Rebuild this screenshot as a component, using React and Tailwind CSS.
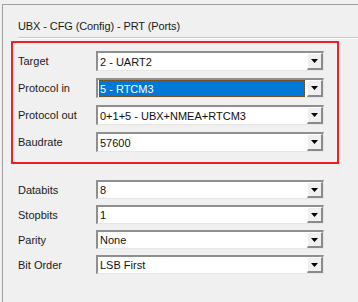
import React from 'react';

const Arrow = () => (
  <svg width="7" height="4" viewBox="0 0 7 4" className="block">
    <path d="M0 0h7L3.5 4z" fill="#000" />
  </svg>
);

const Combo = ({ value, selected = false, tall = true }) => (
  <div
    className={`flex w-[228px] ${tall ? 'h-[20px]' : 'h-[19px]'} bg-white border-t-2 border-l-2 border-t-[#8f8f8f] border-l-[#8f8f8f] border-b border-r border-b-[#e6e6e6] border-r-[#e6e6e6]`}
  >
    <div className="flex-1 flex items-center min-w-0">
      {selected ? (
        <div className="flex-1 h-full my-[1px] ml-[1px] mr-[2px] flex items-center bg-[#0078d7] text-white pl-[1px] outline outline-1 outline-dotted outline-[#6b4a1f] -outline-offset-1">
          {value}
        </div>
      ) : (
        <span className="pl-[2px] text-[#111]">{value}</span>
      )}
    </div>
    <div className="w-[16px] h-full flex items-center justify-center bg-[#f0f0f0] border-t border-l border-t-white border-l-white border-r-2 border-b-2 border-r-[#8a8a8a] border-b-[#8a8a8a]">
      <Arrow />
    </div>
  </div>
);

const Row = ({ label, value, selected, tall }) => (
  <div className="flex items-center">
    <div className="w-[78px] text-[#1a1a1a]">{label}</div>
    <Combo value={value} selected={selected} tall={tall} />
  </div>
);

export default function App() {
  return (
    <div className="w-[358px] h-[302px] bg-[#f0f0f0] pt-[4px] pl-[2px] overflow-hidden font-['Liberation_Sans',Arial,sans-serif] text-[11px] leading-[14px]">
      <div className="h-full border-t border-l border-[#a0a0a0]">
        <div className="pt-[14px] pl-[15px] pb-[4px] text-[#1a1a1a] tracking-[-0.1px]">UBX - CFG (Config) - PRT (Ports)</div>
        <div className="ml-[15px] border-t border-t-[#c8c8c8] border-b border-b-white" />

        <div className="mt-[2px] ml-[8px] w-[328px] border-2 border-[#ee1f26] pt-[8px] pb-[10px] pl-[5px] flex flex-col gap-[7px]">
          <Row label="Target" value="2 - UART2" />
          <Row label="Protocol in" value="5 - RTCM3" selected />
          <Row label="Protocol out" value="0+1+5 - UBX+NMEA+RTCM3" />
          <Row label="Baudrate" value="57600" />
        </div>

        <div className="mt-[16px] pl-[15px] flex flex-col gap-[6px]">
          <Row label="Databits" value="8" tall={false} />
          <Row label="Stopbits" value="1" tall={false} />
          <Row label="Parity" value="None" tall={false} />
          <Row label="Bit Order" value="LSB First" tall={false} />
        </div>
      </div>
    </div>
  );
}
